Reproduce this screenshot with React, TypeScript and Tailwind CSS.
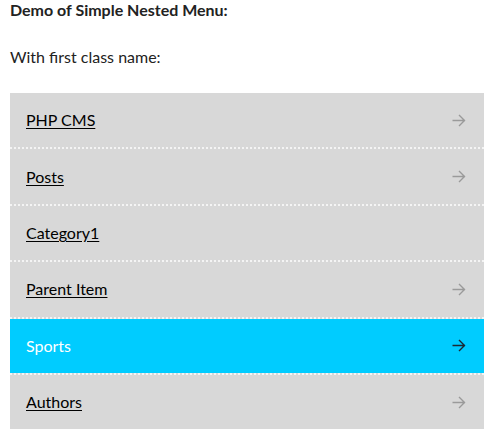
import React from 'react';

const items = [
  { label: 'PHP CMS', arrow: true },
  { label: 'Posts', arrow: true },
  { label: 'Category1', arrow: false },
  { label: 'Parent Item', arrow: true },
  { label: 'Sports', arrow: true, active: true },
  { label: 'Authors', arrow: true },
];

function Arrow({ className }: { className: string }) {
  return (
    <svg width="14" height="13" viewBox="0 0 14 13" fill="none" className={className}>
      <path d="M0.5 6.5h12.5M7 1l5.5 5.5L7 12" stroke="currentColor" strokeWidth="1.4" />
    </svg>
  );
}

export default function App() {
  return (
    <div className="px-[10px] pr-[16px] font-['Lato',sans-serif] text-[#222]">
      <h3 className="mb-[27px] text-[16px] font-bold leading-[20px]">Demo of Simple Nested Menu:</h3>
      <p className="mb-[26px] text-[16px] leading-[20px]">With first class name:</p>
      <ul className="bg-[#d8d8d8]">
        {items.map((item, i) => (
          <li
            key={item.label}
            className={i < items.length - 1 ? 'border-b-2 border-dotted border-[#f4f4f4]' : ''}
          >
            <a
              href="#"
              className={
                'flex h-[54.4px] items-center justify-between pl-4 pr-[18px] text-[16px] ' +
                (item.active ? 'bg-[#00ccff] text-white' : 'text-black')
              }
            >
              <span className={item.active ? '' : 'underline underline-offset-2'}>{item.label}</span>
              {item.arrow && <Arrow className={item.active ? 'text-[#1b2a33]' : 'text-[#9a9a9a]'} />}
            </a>
          </li>
        ))}
      </ul>
    </div>
  );
}
